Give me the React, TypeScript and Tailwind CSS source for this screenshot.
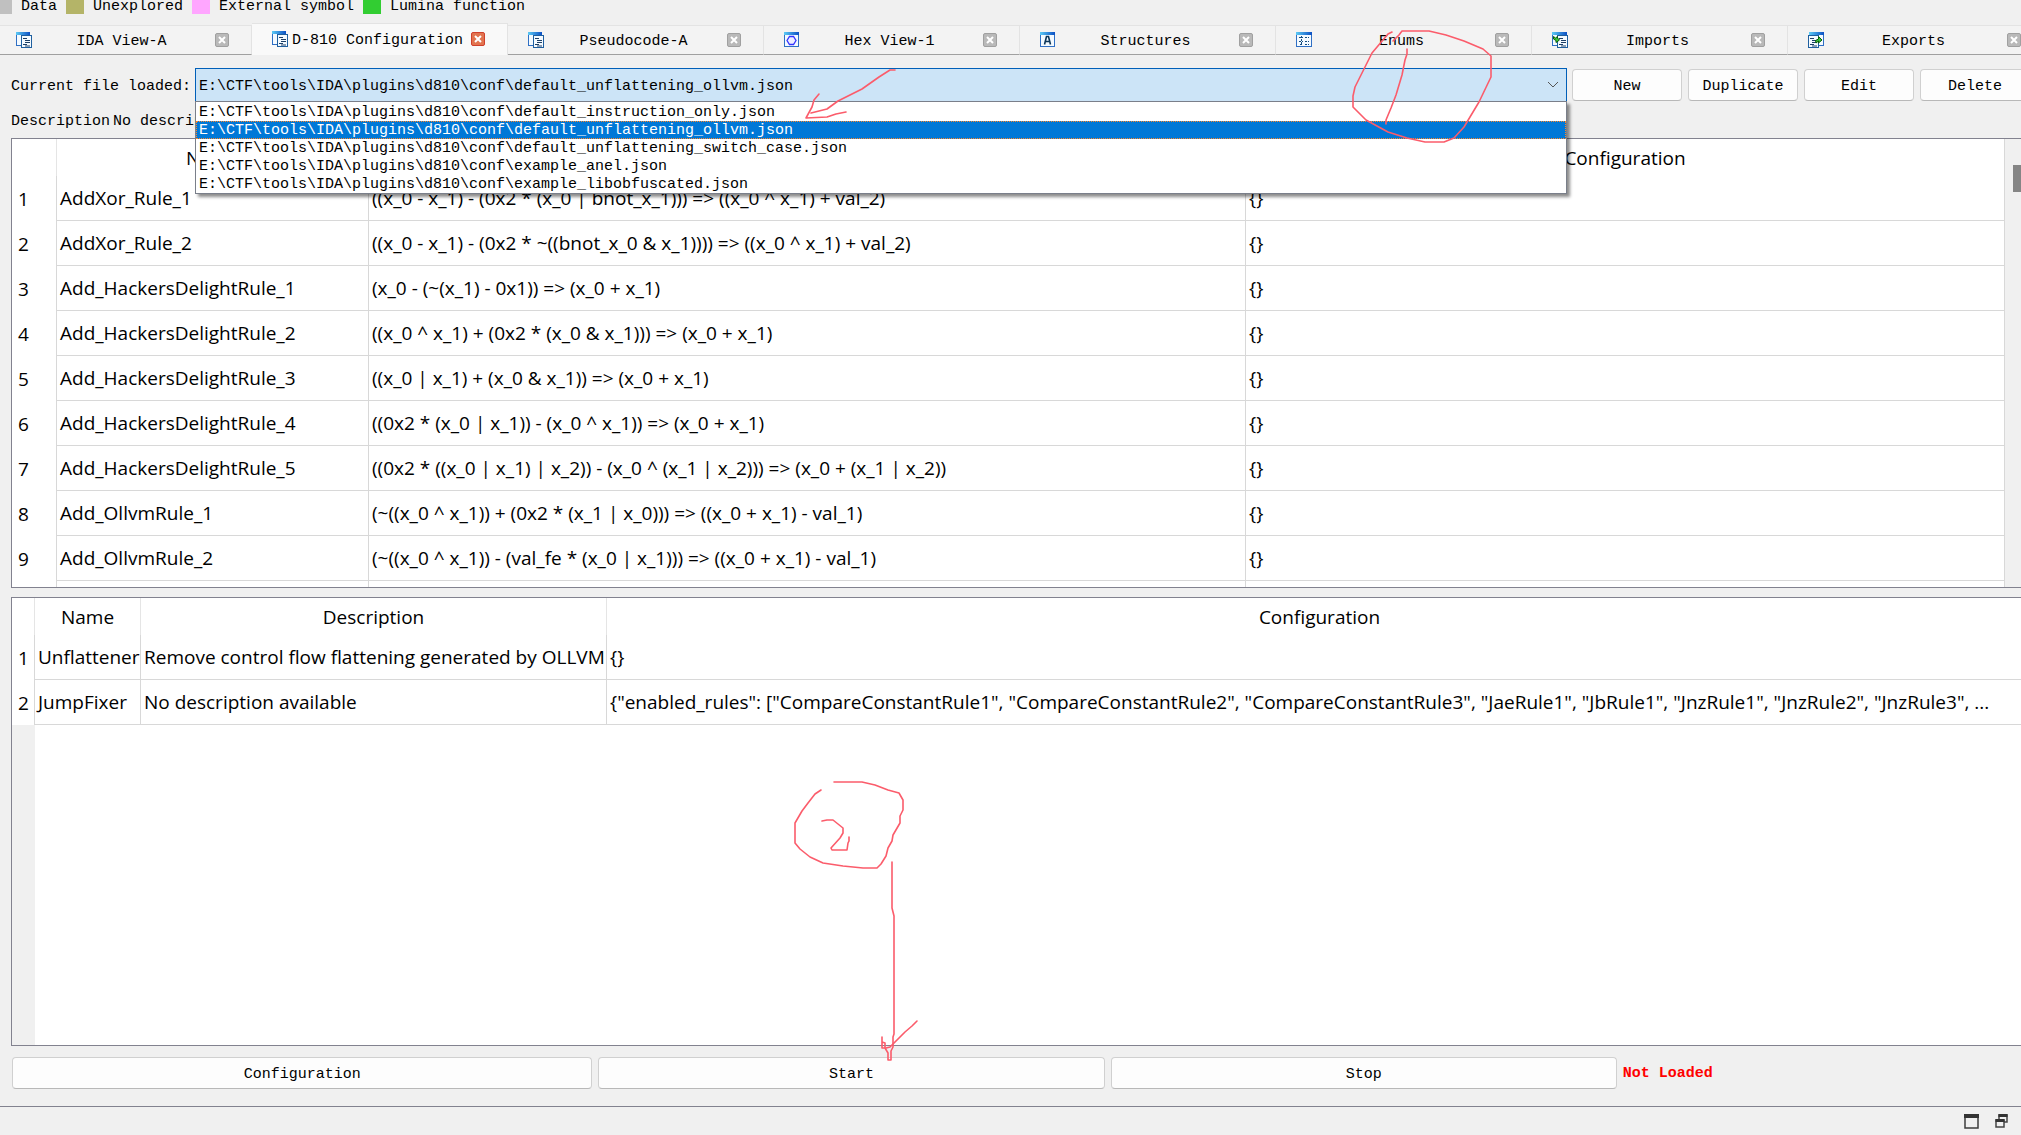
import React from "react";

const legend = [
  { label: "Unexplored", color: "bg-[#b4b468]" },
  { label: "External symbol", color: "bg-[#ffa6ff]" },
  { label: "Lumina function", color: "bg-[#32cd32]" },
];

type IconKind = "doc" | "hex" | "struct" | "enum" | "import" | "export";

const tabs: { label: string; icon: IconKind; active?: boolean }[] = [
  { label: "IDA View-A", icon: "doc" },
  { label: "D-810 Configuration", icon: "doc", active: true },
  { label: "Pseudocode-A", icon: "doc" },
  { label: "Hex View-1", icon: "hex" },
  { label: "Structures", icon: "struct" },
  { label: "Enums", icon: "enum" },
  { label: "Imports", icon: "import" },
  { label: "Exports", icon: "export" },
];

const base = "E:\\CTF\\tools\\IDA\\plugins\\d810\\conf\\";
const files = [
  "default_instruction_only.json",
  "default_unflattening_ollvm.json",
  "default_unflattening_switch_case.json",
  "example_anel.json",
  "example_libobfuscated.json",
];
const selectedFile = files[1];

const rules = [
  ["AddXor_Rule_1", "((x_0 - x_1) - (0x2 * (x_0 | bnot_x_1))) => ((x_0 ^ x_1) + val_2)"],
  ["AddXor_Rule_2", "((x_0 - x_1) - (0x2 * ~((bnot_x_0 & x_1)))) => ((x_0 ^ x_1) + val_2)"],
  ["Add_HackersDelightRule_1", "(x_0 - (~(x_1) - 0x1)) => (x_0 + x_1)"],
  ["Add_HackersDelightRule_2", "((x_0 ^ x_1) + (0x2 * (x_0 & x_1))) => (x_0 + x_1)"],
  ["Add_HackersDelightRule_3", "((x_0 | x_1) + (x_0 & x_1)) => (x_0 + x_1)"],
  ["Add_HackersDelightRule_4", "((0x2 * (x_0 | x_1)) - (x_0 ^ x_1)) => (x_0 + x_1)"],
  ["Add_HackersDelightRule_5", "((0x2 * ((x_0 | x_1) | x_2)) - (x_0 ^ (x_1 | x_2))) => (x_0 + (x_1 | x_2))"],
  ["Add_OllvmRule_1", "(~((x_0 ^ x_1)) + (0x2 * (x_1 | x_0))) => ((x_0 + x_1) - val_1)"],
  ["Add_OllvmRule_2", "(~((x_0 ^ x_1)) - (val_fe * (x_0 | x_1))) => ((x_0 + x_1) - val_1)"],
];

const blockRules = [
  ["Unflattener", "Remove control flow flattening generated by OLLVM", "{}"],
  [
    "JumpFixer",
    "No description available",
    '{"enabled_rules": ["CompareConstantRule1", "CompareConstantRule2", "CompareConstantRule3", "JaeRule1", "JbRule1", "JnzRule1", "JnzRule2", "JnzRule3", ...',
  ],
];

function Sheet({ x, y, w, h }: { x: number; y: number; w: number; h: number }) {
  return (
    <>
      <rect x={x + 0.5} y={y + 0.5} width={w - 1} height={h - 1} fill="#f4faff" stroke="#2f6fc4" />
      <rect x={x} y={y} width={w} height={3} fill="url(#titleBar)" />
    </>
  );
}

function Lines({ x }: { x: number }) {
  return (
    <>
      <rect x={x + 0.5} y="3.5" width="10" height="12" fill="#f4faff" stroke="#1f5f9f" />
      <path d={`M${x + 2} 6.5h4M${x + 4} 8.5h5M${x + 4} 10.5h5M${x + 2} 12.5h4M${x + 4} 14h5`} stroke="#1d3f66" />
    </>
  );
}

function TabIcon({ kind }: { kind: IconKind }) {
  return (
    <svg className="size-4 shrink-0" viewBox="0 0 16 16" fill="none" aria-hidden="true">
      <defs>
        <linearGradient id="titleBar" x1="0" x2="1" y1="0" y2="0">
          <stop offset="0" stopColor="#5ccbf5" />
          <stop offset="1" stopColor="#0b4fc4" />
        </linearGradient>
      </defs>
      {kind === "doc" && (
        <>
          <Sheet x={0} y={0} w={14} h={14} />
          <Lines x={5} />
        </>
      )}
      {kind === "hex" && (
        <>
          <Sheet x={0} y={0} w={15} h={15} />
          <path d="M5.500 4.500h4l2.500 4-2.500 4h-4l-2.500-4z" fill="#eef" stroke="#3434ff" strokeWidth="1.3" />
        </>
      )}
      {kind === "struct" && (
        <>
          <Sheet x={0} y={0} w={15} h={15} />
          <path d="M4.5 12.5l2-8h2l2 8M5.5 9.5h4" stroke="#0b3558" strokeWidth="1.6" />
        </>
      )}
      {kind === "enum" && (
        <>
          <Sheet x={0} y={0} w={16} h={15} />
          <path d="M3 5.5h4M3 9.5h4M4 12.5h3M5.5 4v9M9 5.5h4M9 9.5h4M9 12.5h4" stroke="#134c80" strokeDasharray="2 1" />
        </>
      )}
      {kind === "import" && (
        <>
          <Sheet x={0} y={0} w={15} h={14} />
          <Lines x={5} />
          <path d="M1.500 4.500l2 1.500 2-1.500v1.500l2 2-3.500 2.500v-2l-2.500-1.500z" fill="#39c639" stroke="#0c5c0c" />
        </>
      )}
      {kind === "export" && (
        <>
          <Sheet x={1} y={0} w={15} h={14} />
          <Lines x={0} />
          <path d="M7.500 8.500l3-1.500v-2.500l3.500 3.500-3.500 3v-2l-2.500 2z" fill="#39c639" stroke="#0c5c0c" />
        </>
      )}
    </svg>
  );
}

function CloseButton({ label, active }: { label: string; active?: boolean }) {
  return (
    <button
      type="button"
      aria-label={`Close ${label}`}
      className={
        active
          ? "flex size-[14px] shrink-0 items-center justify-center rounded-[2px] border border-[#d0402c] bg-[#e2744f]"
          : "flex size-[14px] shrink-0 items-center justify-center rounded-[2px] border border-[#a0a0a0] bg-[#b9b9b9]"
      }
    >
      <svg className="size-2" viewBox="0 0 8 8" aria-hidden="true">
        <path d="M1 1l6 6M7 1l-6 6" stroke="#fff" strokeWidth="2" />
      </svg>
    </button>
  );
}

function TabBar() {
  return (
    <div role="tablist" className="flex h-8 items-end">
      {tabs.map((t, i) => (
        <div
          key={t.label}
          className={
            t.active
              ? "flex h-8 w-64 shrink-0 items-center border-t border-r border-[#e3e3e3] bg-[#f9f9f9] pr-[22px] pb-[2px] pl-5"
              : i === 0
                ? "flex h-[30px] w-[252px] shrink-0 items-center border-t border-r border-b border-[#e3e3e3] border-b-[#a0a0a0] bg-[#f3f3f3] pr-[22px] pl-4"
                : "flex h-[30px] w-64 shrink-0 items-center border-t border-r border-b border-[#e3e3e3] border-b-[#a0a0a0] bg-[#f3f3f3] pr-[22px] pl-5"
          }
        >
          <TabIcon kind={t.icon} />
          <button role="tab" type="button" aria-selected={!!t.active} className="flex-1 pt-1 pr-1 text-center whitespace-nowrap">
            {t.label}
          </button>
          <CloseButton label={t.label} active={t.active} />
        </div>
      ))}
    </div>
  );
}

function PushButton({ children, className = "" }: { children: React.ReactNode; className?: string }) {
  return (
    <button
      type="button"
      className={`h-8 rounded-[4px] border border-[#d0d0d0] border-b-[#b8b8b8] bg-[#fdfdfd] pt-[3px] text-center ${className}`}
    >
      {children}
    </button>
  );
}

function FilePicker() {
  return (
    <div className="relative flex-1">
      <select
        id="config-file"
        defaultValue={selectedFile}
        className="block h-[34px] w-full appearance-none border border-[#005fb8] border-b-[#7a7f8a] bg-[#cce4f7] pt-[3px] pl-[3px] outline-none"
      >
        {files.map((f) => (
          <option key={f} value={f}>
            {base + f}
          </option>
        ))}
      </select>
      <svg className="pointer-events-none absolute top-[13px] right-2 h-2 w-3" viewBox="0 0 12 8" fill="none" aria-hidden="true">
        <path d="M1 1l5 5 5-5" stroke="#555" />
      </svg>
      <ul
        role="listbox"
        aria-label="Configuration files"
        className="absolute inset-x-0 top-[33px] z-10 border border-[#7a7f8a] bg-white pt-px shadow-[3px_3px_3px_rgba(0,0,0,0.45)]"
      >
        {files.map((f) => (
          <li
            key={f}
            role="option"
            aria-selected={f === selectedFile}
            className={
              f === selectedFile
                ? "h-[18px] bg-[#0078d7] pl-[3px] leading-[20px] text-white outline-1 -outline-offset-1 outline-[#ff8728] outline-dotted"
                : "h-[18px] pl-[3px] leading-[20px]"
            }
          >
            {base + f}
          </li>
        ))}
      </ul>
    </div>
  );
}

function HeaderRow() {
  return (
    <thead>
      <tr className="h-[37px]">
        <td className="border-r border-[#e5e5e5]" />
        <th className="border-r border-[#e5e5e5] font-normal">Name</th>
        <th className="border-r border-[#e5e5e5] font-normal">Description</th>
        <th className="font-normal">Configuration</th>
      </tr>
    </thead>
  );
}

function RuleRow({ n, cells }: { n: number; cells: string[] }) {
  return (
    <tr className="h-[45px]">
      <th scope="row" className="border-r border-[#d8d8d8] pl-[6px] text-left font-normal">
        {n}
      </th>
      {cells.map((c, i) => (
        <td key={i} className="overflow-hidden border-r border-b border-[#d8d8d8] pl-[3px] last:border-r-0">
          {c}
        </td>
      ))}
    </tr>
  );
}

function InstructionTable() {
  return (
    <div className="flex h-[450px] overflow-hidden border border-[#82828f] bg-white">
      <div className="min-w-0 flex-1 overflow-hidden border-r border-[#d8d8d8]">
        <table className="w-full table-fixed border-separate border-spacing-0 whitespace-nowrap">
          <colgroup>
            <col className="w-[45px]" />
            <col className="w-[312px]" />
            <col className="w-[877px]" />
            <col />
          </colgroup>
          <HeaderRow />
          <tbody>
            {rules.map(([name, desc], i) => (
              <RuleRow key={name} n={i + 1} cells={[name, desc, "{}"]} />
            ))}
            <tr className="h-[45px]">
              <td className="border-r border-[#d8d8d8]" />
              <td className="border-r border-[#d8d8d8]" />
              <td className="border-r border-[#d8d8d8]" />
              <td />
            </tr>
          </tbody>
        </table>
      </div>
      <div className="w-[27px] bg-[#f0f0f0] pt-[26px] pl-2">
        <div className="h-[27px] w-3 bg-[#858585]" />
      </div>
    </div>
  );
}

function BlockTable() {
  return (
    <div className="flex h-[449px] flex-col overflow-hidden border border-[#82828f] bg-white">
      <table className="w-full table-fixed border-separate border-spacing-0 whitespace-nowrap">
        <colgroup>
          <col className="w-[23px]" />
          <col className="w-[106px]" />
          <col className="w-[466px]" />
          <col />
        </colgroup>
        <HeaderRow />
        <tbody>
          {blockRules.map((cells, i) => (
            <RuleRow key={cells[0]} n={i + 1} cells={cells} />
          ))}
        </tbody>
      </table>
      <div className="w-[23px] flex-1 bg-[#f0f0f0]" />
    </div>
  );
}

function Annotations() {
  return (
    <svg
      className="pointer-events-none absolute top-0 left-0 z-20 h-[1135px] w-[2021px]"
      viewBox="0 0 2021 1135"
      fill="none"
      stroke="#fb5c6b"
      strokeWidth="1.6"
      strokeLinecap="round"
      strokeLinejoin="round"
      aria-hidden="true"
    >
      <path d="M895 70H890L879 77L862 89L838 101L827 109L811 113" />
      <path d="M819 94L814 100L812 107L806 118L827 117L836 114L846 112" />
      <path d="M1392 32L1388 34L1372 53L1355 87L1353 96V107L1366 120L1388 132L1407 138L1425 142H1444L1454 138L1464 127L1479 102L1491 77V56L1483 49L1464 41L1446 35L1429 31H1402L1399 35L1393 41" />
      <path d="M1407 49V54L1405 60L1402 75L1396 95L1391 108L1386 120V124" />
      <path d="M821 790L815 794L808 803L802 811L795 823V843L800 849L810 857L823 863L843 866L863 868H877L881 864L886 856L888 848L892 841L893 835L900 823V816L903 810V800L899 793L888 790L875 785L862 782H834" />
      <path d="M822 821L827 820H833L843 828V833L840 838L831 848L832 850H847L848 843L849 841V837" />
      <path d="M892 862V908L894 916V1034L893 1037V1047L891 1051V1060H888V1053L885 1048H882V1037M882 1042L885 1043V1048" />
      <path d="M886 1048L890 1047L905 1032L912 1026L917 1021" />
    </svg>
  );
}

export default function App() {
  return (
    <div className="relative flex min-h-screen flex-col overflow-hidden bg-[#f0f0f0] font-['Liberation_Mono',monospace] text-[15px] leading-[18px] text-black">
      <div className="flex h-[23px] gap-[9px] leading-[14px]">
        <div className="flex gap-[9px]">
          <span className="h-[14px] w-3 bg-[#c0c0c0]" />
          <span>Data</span>
        </div>
        {legend.map((l) => (
          <div key={l.label} className="flex gap-[9px]">
            <span className={`h-[14px] w-[18px] ${l.color}`} />
            <span>{l.label}</span>
          </div>
        ))}
      </div>

      <TabBar />

      <main className="-mr-3 flex flex-1 flex-col pt-[13px] pl-[11px]">
        <div className="flex items-center gap-[5px] pr-[3px]">
          <div className="flex flex-1 items-center">
            <label htmlFor="config-file" className="w-[184px] shrink-0 pt-[3px] whitespace-nowrap">
              Current file loaded:
            </label>
            <FilePicker />
          </div>
          <div className="flex gap-[6px]">
            <PushButton className="w-[110px]">New</PushButton>
            <PushButton className="w-[110px]">Duplicate</PushButton>
            <PushButton className="w-[110px]">Edit</PushButton>
            <PushButton className="w-[110px]">Delete</PushButton>
          </div>
        </div>

        <div className="flex h-9 items-center gap-[3px] pt-[3px]">
          <span>Description</span>
          <span>No description available</span>
        </div>

        <div className="flex flex-col gap-[9px] font-['Open_Sans',sans-serif] text-[19px] leading-6">
          <InstructionTable />
          <BlockTable />
        </div>

        <div className="grid grid-cols-[580fr_506fr_506fr_410fr] gap-[6px] pt-[11px] pl-px">
          <PushButton>Configuration</PushButton>
          <PushButton>Start</PushButton>
          <PushButton>Stop</PushButton>
          <div className="self-center pt-[2px] font-bold text-[#ff0000]">Not Loaded</div>
        </div>
      </main>

      <footer className="flex h-[29px] items-start justify-end gap-4 border-t border-[#82828f] pt-[7px] pr-[13px]">
        <button type="button" aria-label="Maximize" className="size-[15px]">
          <svg viewBox="0 0 15 15" className="size-[15px]" fill="none" aria-hidden="true">
            <rect x="1" y="1" width="13" height="13" stroke="#3c3c3c" strokeWidth="1.5" />
            <rect width="15" height="4" fill="#333" />
          </svg>
        </button>
        <button type="button" aria-label="Restore" className="h-[14px] w-[13px]">
          <svg viewBox="0 0 13 14" className="h-[14px] w-[13px]" fill="none" aria-hidden="true">
            <path d="M4 5V1h8v7H9" stroke="#444" strokeWidth="1.5" />
            <path d="M3.5 1.5h9" stroke="#333" strokeWidth="3" />
            <rect x="1" y="6" width="8" height="7" fill="#f0f0f0" stroke="#444" strokeWidth="1.5" />
            <path d="M.5 6.5h9" stroke="#333" strokeWidth="3" />
          </svg>
        </button>
      </footer>

      <Annotations />
    </div>
  );
}
